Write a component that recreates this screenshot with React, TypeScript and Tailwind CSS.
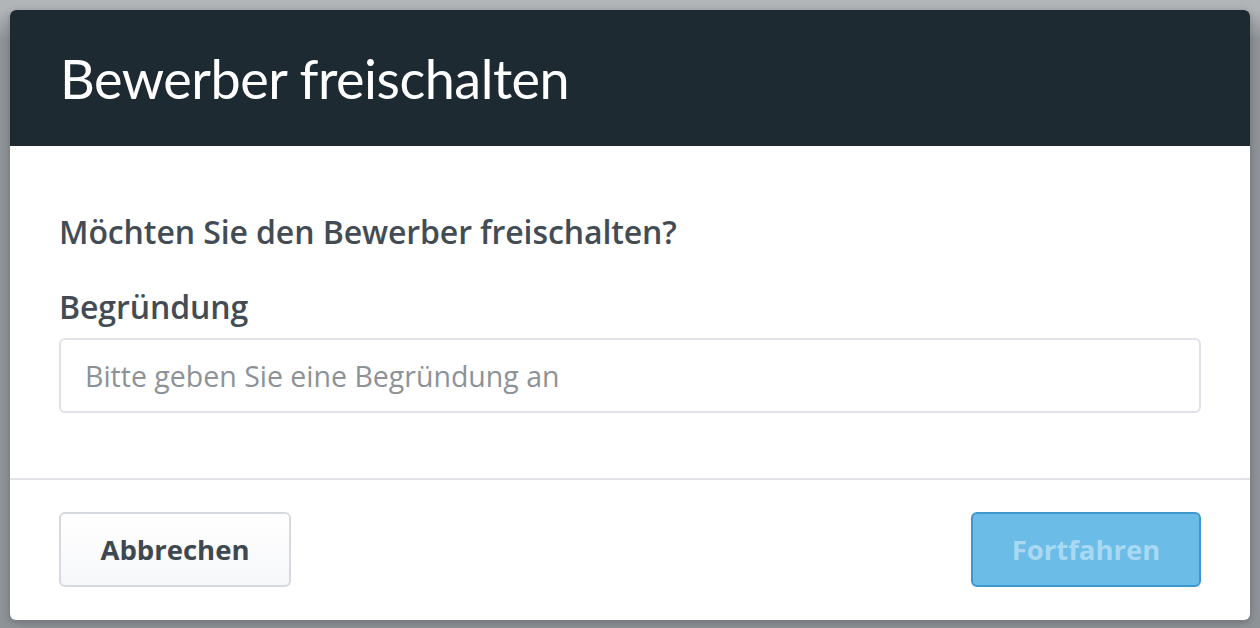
export default function App() {
  return (
    <div className="h-[628px] w-full overflow-hidden p-[10px] bg-[linear-gradient(to_bottom,#b1b5b8_0px,#b1b5b8_10px,#8e9398_40px,#8e9398_100%)]">
      <div className="flex h-[610px] flex-col overflow-hidden rounded-[6px] bg-white shadow-[0_2px_8px_rgba(0,0,0,0.25)]">
        <div className="flex h-[136px] shrink-0 items-center bg-[#1e2a31] px-[50px]">
          <h1 className="font-['Lato',sans-serif] text-[54px] font-normal tracking-[-0.5px] text-white">
            Bewerber freischalten
          </h1>
        </div>

        <div className="flex flex-1 flex-col px-[49px] pt-[66px] font-['Open_Sans',sans-serif]">
          <p className="text-[32px] font-semibold leading-[40px] tracking-[-0.1px] text-[#434c54]">
            Möchten Sie den Bewerber freischalten?
          </p>
          <label className="mt-[35px] text-[32px] font-semibold leading-[40px] tracking-[-0.1px] text-[#434c54]">
            Begründung
          </label>
          <input
            className="mt-[11px] h-[75px] w-full rounded-[6px] border-2 border-[#e1e2e7] px-[24px] text-[28.5px] text-[#434c54] outline-none placeholder:text-[#8d9297]"
            placeholder="Bitte geben Sie eine Begründung an"
          />
        </div>

        <div className="flex h-[142px] shrink-0 items-start justify-between border-t-2 border-[#e3e3e8] px-[49px] pt-[32px] font-['Open_Sans',sans-serif]">
          <button className="h-[75px] w-[232px] rounded-[6px] border-2 border-[#d6d9dd] bg-gradient-to-b from-white to-[#f6f7f9] text-[27.5px] font-bold text-[#3e4850]">
            Abbrechen
          </button>
          <button className="h-[75px] w-[230px] rounded-[6px] border-2 border-[#3f97cf] bg-[#6bbde7] text-[27.5px] font-bold text-[#a9d9f2]">
            Fortfahren
          </button>
        </div>
      </div>
    </div>
  );
}
